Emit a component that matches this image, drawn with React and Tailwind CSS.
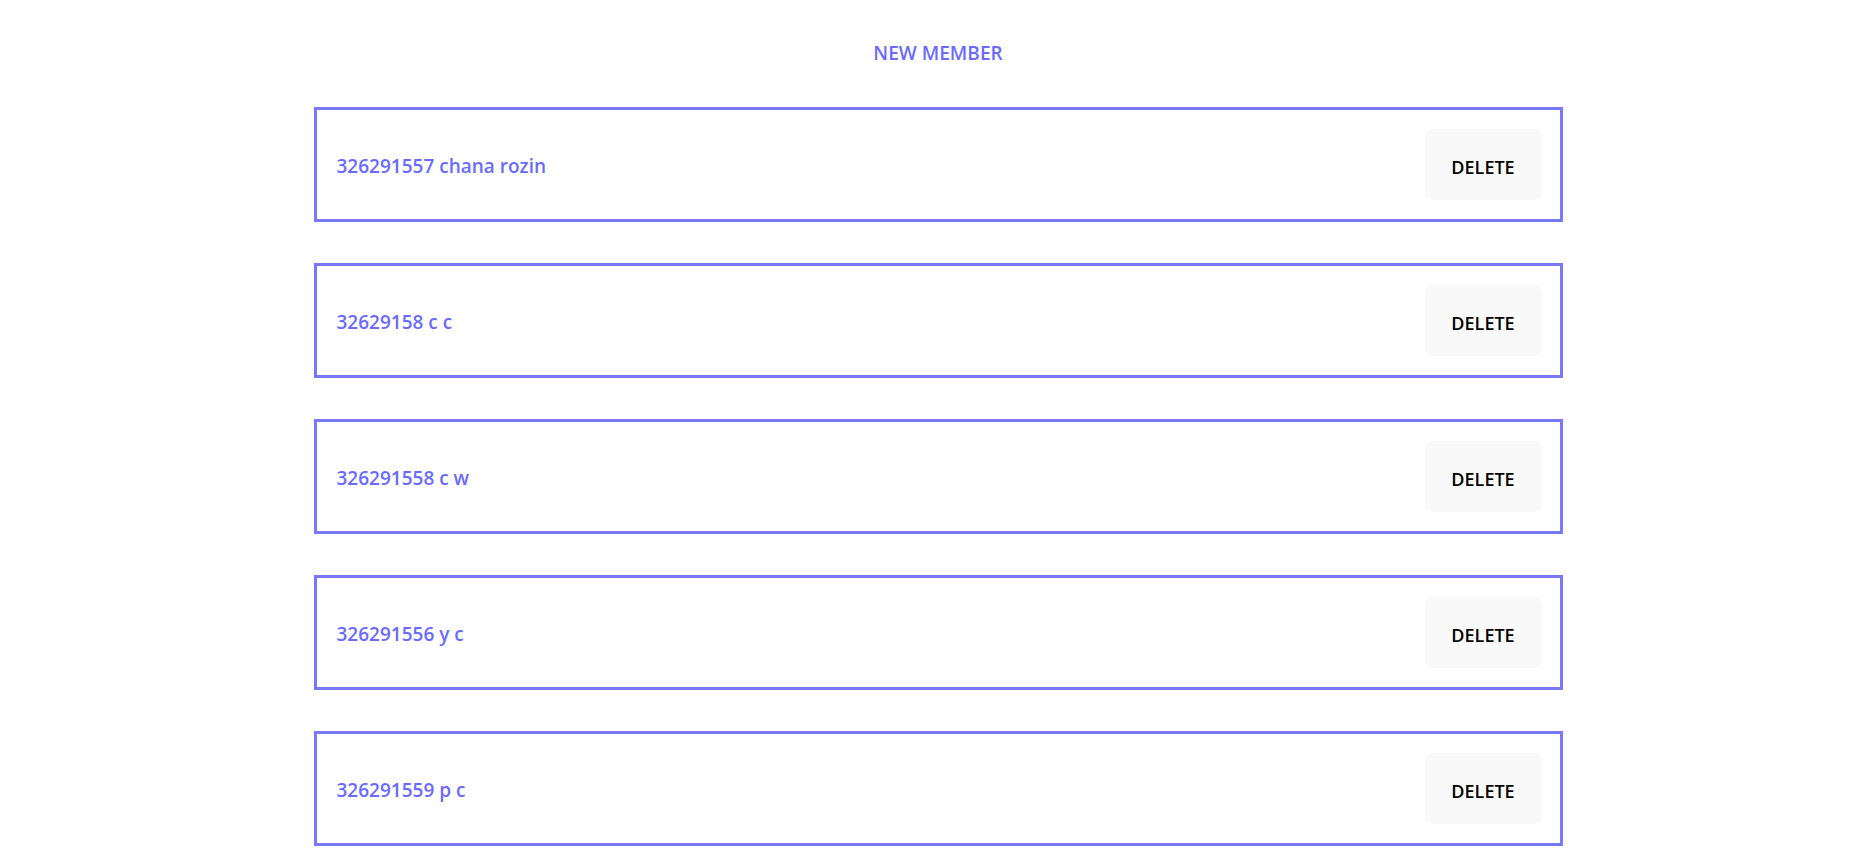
const members = [
  { id: '326291557', name: 'chana rozin' },
  { id: '32629158', name: 'c c' },
  { id: '326291558', name: 'c w' },
  { id: '326291556', name: 'y c' },
  { id: '326291559', name: 'p c' },
];

const App = () => {
  return (
    <div className="min-h-screen bg-white pt-[40px] font-['Open_Sans',sans-serif]">
      <h2 className="text-center text-[19px] leading-[26px] font-semibold text-[#6a6aff]">NEW MEMBER</h2>

      <div className="mt-[41px] mx-auto w-[1249px] flex flex-col gap-[41px]">
        {members.map((m) => (
          <div key={m.id} className="h-[115px] border-[3px] border-[#7878ff] flex items-center justify-between pl-[20px] pr-[18px]">
            <p className="text-[19px] font-semibold text-[#6a6aff] pt-[4px]">{m.id} {m.name}</p>
            <button className="w-[117px] h-[71px] rounded-[8px] bg-[#f9f9f9] text-[18px] font-semibold text-black pt-[5px]">DELETE</button>
          </div>
        ))}
      </div>
    </div>
  );
};

export default App;
